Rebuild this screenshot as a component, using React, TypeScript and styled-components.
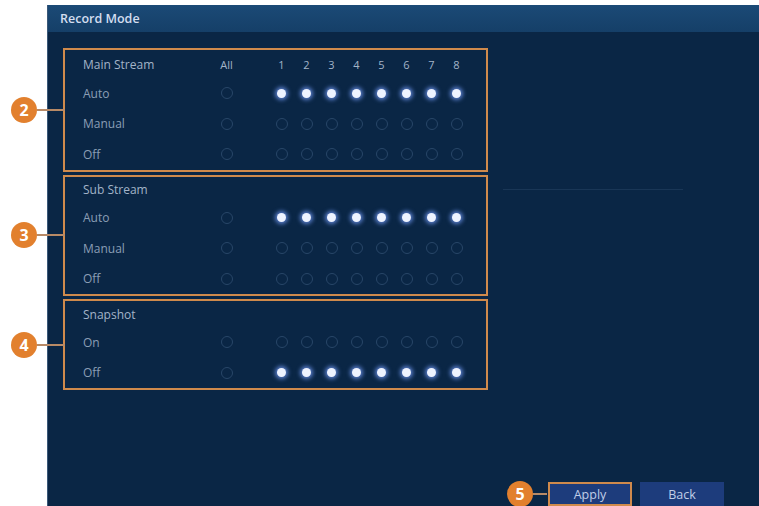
import styled, { createGlobalStyle } from "styled-components";

const GlobalStyle = createGlobalStyle`
   html, body {
      margin: 0;
      padding: 0;
      background: #ffffff;
   }
   body {
      font-family: "Open Sans", "Liberation Sans", sans-serif;
   }
`;

const CHANNELS = [1, 2, 3, 4, 5, 6, 7, 8];

interface Row {
   label: string;
   checked: boolean;
}

interface Group {
   badge: number;
   title: string;
   numbers?: boolean;
   rows: Row[];
}

const GROUPS: Group[] = [
   {
      badge: 2,
      title: "Main Stream",
      numbers: true,
      rows: [
         { label: "Auto", checked: true },
         { label: "Manual", checked: false },
         { label: "Off", checked: false },
      ],
   },
   {
      badge: 3,
      title: "Sub Stream",
      rows: [
         { label: "Auto", checked: true },
         { label: "Manual", checked: false },
         { label: "Off", checked: false },
      ],
   },
   {
      badge: 4,
      title: "Snapshot",
      rows: [
         { label: "On", checked: false },
         { label: "Off", checked: true },
      ],
   },
];

const App = () => {
   return (
      <Page>
         <GlobalStyle />
         <Panel>
            <TitleBar>Record Mode</TitleBar>
            <Body>
               <Content>
                  <Groups>
                     {GROUPS.map((g) => (
                        <GroupBox key={g.title}>
                           <Callout>
                              <Badge>{g.badge}</Badge>
                              <Leader />
                           </Callout>
                           <HeaderRow $first={g.numbers}>
                              <Label $head>{g.title}</Label>
                              <AllCell>{g.numbers ? "All" : ""}</AllCell>
                              <Channels>
                                 {CHANNELS.map((c) => (
                                    <Cell key={c}>{g.numbers ? c : ""}</Cell>
                                 ))}
                              </Channels>
                           </HeaderRow>
                           {g.rows.map((r) => (
                              <ItemRow key={r.label}>
                                 <Label>{r.label}</Label>
                                 <AllCell>
                                    <Radio />
                                 </AllCell>
                                 <Channels>
                                    {CHANNELS.map((c) => (
                                       <Cell key={c}>
                                          <Radio $on={r.checked} />
                                       </Cell>
                                    ))}
                                 </Channels>
                              </ItemRow>
                           ))}
                        </GroupBox>
                     ))}
                  </Groups>
                  <SidePane />
               </Content>
               <Footer>
                  <Button $active>
                     <Callout>
                        <Badge>5</Badge>
                        <Leader $short />
                     </Callout>
                     Apply
                  </Button>
                  <Button>Back</Button>
               </Footer>
            </Body>
         </Panel>
      </Page>
   );
};

export default App;

const Page = styled.div`
   width: 759px;
   height: 506px;
   padding: 5px 0 0 47px;
   box-sizing: border-box;
   overflow: hidden;
`;

const Panel = styled.div`
   height: 501px;
   display: flex;
   flex-direction: column;
   background: #0a2645;
   border-left: 1px solid #3a5878;
`;

const TitleBar = styled.div`
   height: 27px;
   display: flex;
   align-items: center;
   padding-left: 12px;
   background: linear-gradient(#1b4a76, #153f68);
   color: #d3def0;
   font-size: 12.5px;
   font-weight: 600;
`;

const Body = styled.div`
   flex: 1;
   display: flex;
   flex-direction: column;
`;

const Content = styled.div`
   flex: 1;
   display: flex;
   padding: 16px 0 0 15px;
`;

const Groups = styled.div`
   display: flex;
   flex-direction: column;
   gap: 3px;
`;

const GroupBox = styled.div`
   position: relative;
   width: 425px;
   box-sizing: border-box;
   border: 2px solid #cf8a4c;
   padding-left: 18px;
`;

const Callout = styled.div`
   position: absolute;
   left: -54px;
   top: 50%;
   transform: translateY(-50%);
   display: flex;
   align-items: center;
`;

const Badge = styled.div`
   width: 26px;
   height: 26px;
   border-radius: 50%;
   background: #e2802e;
   color: #ffffff;
   font-size: 16px;
   font-weight: 700;
   display: flex;
   align-items: center;
   justify-content: center;
`;

const Leader = styled.div<{ $short?: boolean }>`
   width: ${(p) => (p.$short ? "14px" : "28px")};
   height: 2px;
   background: #b88a66;
`;

const HeaderRow = styled.div<{ $first?: boolean }>`
   height: ${(p) => (p.$first ? "28px" : "26px")};
   display: flex;
   align-items: center;
`;

const ItemRow = styled.div`
   height: 30.5px;
   display: flex;
   align-items: center;
`;

const Label = styled.div<{ $head?: boolean }>`
   width: 131px;
   font-size: 12px;
   color: ${(p) => (p.$head ? "#a3b4c8" : "#8a9eb5")};
`;

const AllCell = styled.div`
   width: 25px;
   margin-right: 30px;
   display: flex;
   justify-content: center;
   font-size: 11px;
   color: #a3b4c8;
`;

const Channels = styled.div`
   display: flex;
`;

const Cell = styled.div`
   width: 25px;
   display: flex;
   justify-content: center;
   font-size: 11px;
   color: #a3b4c8;
`;

const Radio = styled.span<{ $on?: boolean }>`
   display: block;
   box-sizing: border-box;
   border-radius: 50%;
   width: ${(p) => (p.$on ? "9px" : "12px")};
   height: ${(p) => (p.$on ? "9px" : "12px")};
   background: ${(p) => (p.$on ? "#eef3ff" : "transparent")};
   border: ${(p) => (p.$on ? "none" : "1px solid #284668")};
   box-shadow: ${(p) => (p.$on ? "0 0 4px 2px rgba(120, 160, 255, 0.75)" : "none")};
`;

const SidePane = styled.div`
   width: 180px;
   height: 157px;
   margin: -16px 0 0 15px;
   border-bottom: 1px solid rgba(140, 170, 210, 0.12);
`;

const Footer = styled.div`
   display: flex;
   justify-content: flex-end;
   gap: 8px;
   padding-right: 35px;
`;

const Button = styled.div<{ $active?: boolean }>`
   position: relative;
   width: 84px;
   height: 24px;
   box-sizing: border-box;
   display: flex;
   align-items: center;
   justify-content: center;
   background: #1d3c7c;
   border: 2px solid ${(p) => (p.$active ? "#cf8a4c" : "#1d3c7c")};
   color: #c0cee8;
   font-size: 12.5px;
   ${Callout} {
      left: -43px;
   }
`;
